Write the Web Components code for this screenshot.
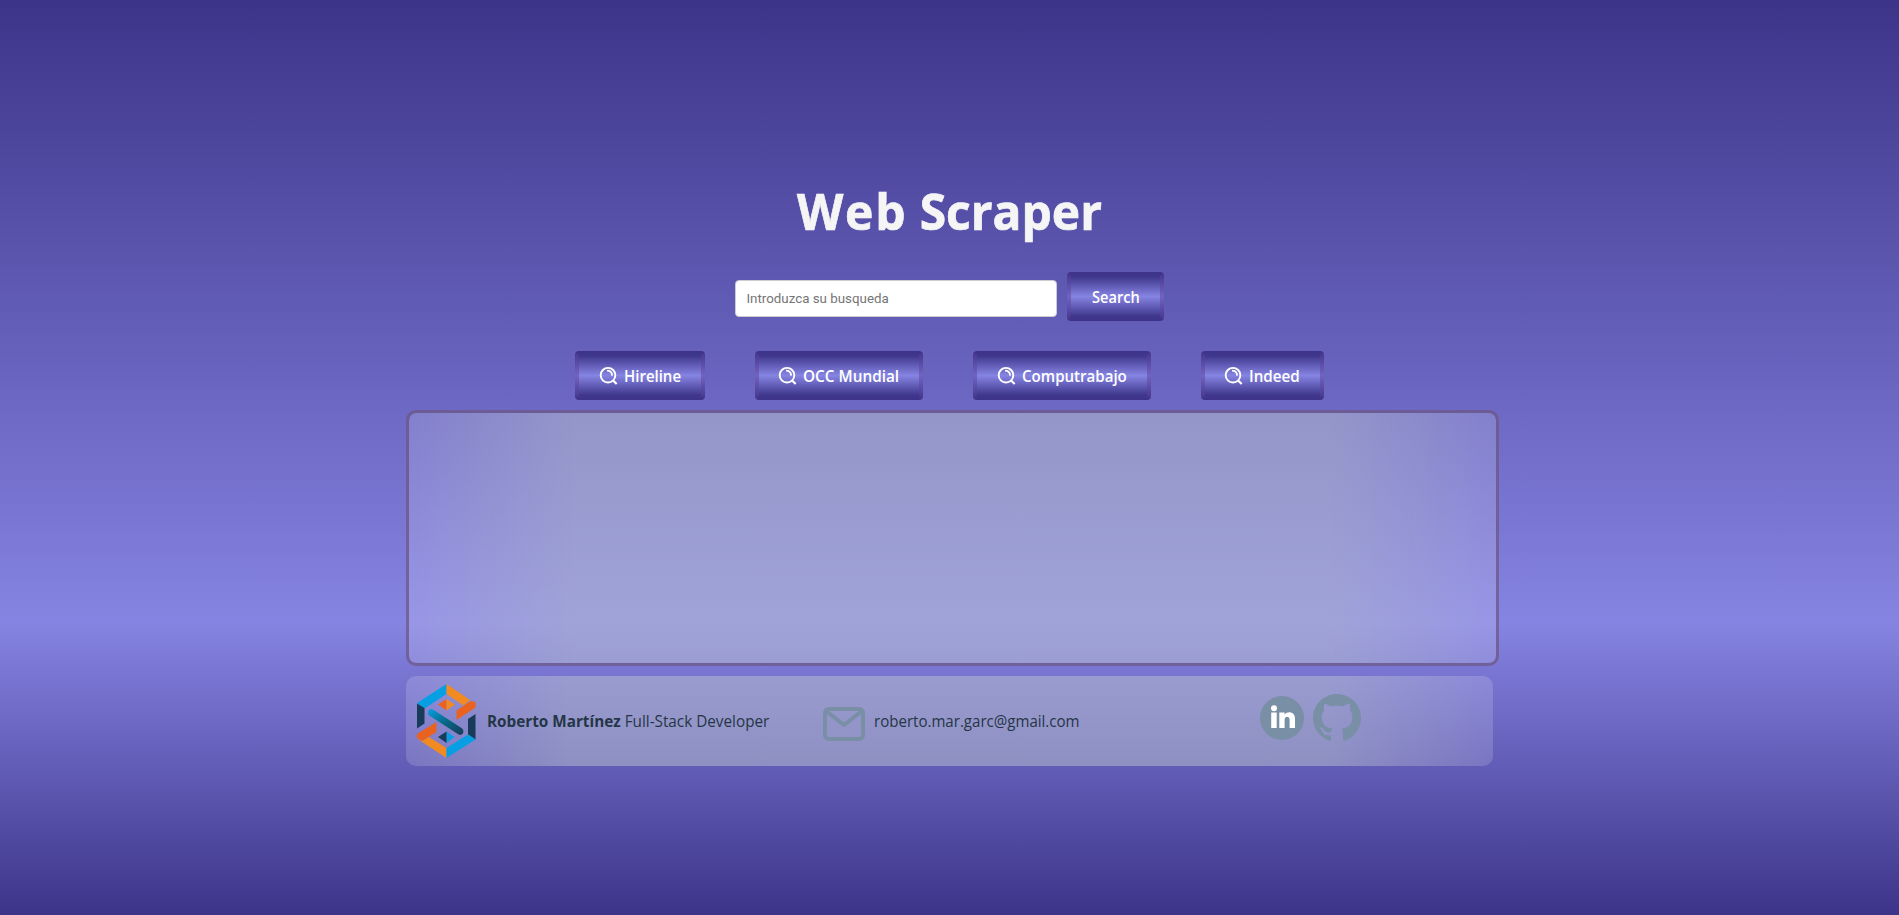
<!DOCTYPE html>
<html lang="es"><head><meta charset="utf-8"><title>Web Scraper</title>
<style>
html{height:100%}
body{margin:0;min-height:100%;background:linear-gradient(#3c3489 0%,#8684e2 68%,#3c3489 100%);font-family:"Open Sans","Noto Sans",sans-serif;--glass:linear-gradient(90deg,rgba(255,255,255,.15) 0,rgba(186,194,206,.5) 15%,rgba(186,194,206,.5) 85%,rgba(255,255,255,.15) 100%)}
</style></head><body>
<scraper-app></scraper-app>
<script>
const define=(name,html)=>customElements.define(name,class extends HTMLElement{
  constructor(){super();this.attachShadow({mode:'open'}).innerHTML=html;}
});
/* One line of text set to a given measure */
customElements.define('text-line',class extends HTMLElement{
  constructor(){super();this.attachShadow({mode:'open'}).innerHTML=`<style>:host{display:inline-block;white-space:nowrap}span{display:inline-block;transform-origin:0 50%}</style><span><slot></slot></span>`;}
  connectedCallback(){requestAnimationFrame(()=>this.fit());this.fit();}
  fit(){const s=this.shadowRoot.querySelector('span');const w=parseFloat(this.getAttribute('width'));this.style.width=w+'px';const n=s.offsetWidth;if(n)s.style.transform=`scaleX(${w/n})`;}
});
define('site-button',`<style>
:host{display:block;box-sizing:border-box;height:49px;border:4px solid;border-color:rgba(62,52,137,.75) rgba(80,50,140,.4);border-radius:4px;background:linear-gradient(#3c3489,#8684e2,#3c3489) padding-box,linear-gradient(#3c3489,#8684e2,#3c3489) border-box;color:#fff;font-weight:650;font-size:15.5px}
div{height:41px;display:flex;align-items:center;justify-content:center;gap:6px;padding-top:1px;box-sizing:border-box}
</style><div><slot name="icon"></slot><slot></slot></div>`);
define('search-icon',`<style>:host{display:block;width:19px;height:19px;margin:-2px 0 0 -1px}svg{display:block}</style>
<svg width="19" height="19" viewBox="0 0 19 19" fill="none" stroke="#fff"><circle cx="9" cy="9.200" r="7.300" stroke-width="1.900"/><path d="M13.800 14.200l3.900 3.800" stroke-width="2.200"/><path d="M8 4.700c3.200 0 5 1.800 5.200 4.900" stroke-width="1.800"/></svg>`);
define('search-box',`<style>:host{display:block}input{display:block;box-sizing:border-box;width:322px;height:37px;border:1px solid #ccc;border-radius:4px;padding:1px 10.500px;margin:0;font:13.333px Roboto,sans-serif;background:#fff;outline:0}input::placeholder{color:#757575;opacity:1}</style><input placeholder="Introduzca su busqueda">`);
define('result-panel',`<style>:host{display:block;box-sizing:border-box;width:1093px;height:256px;border:3px solid rgba(108,86,128,.7);border-radius:10px;background:var(--glass) padding-box}</style>`);
define('brand-logo',`<style>:host{display:block;width:60px;height:76px}svg{display:block}</style>
<svg width="60" height="76" viewBox="0 0 60 76"><defs><linearGradient id="g" x1="0" y1="0" x2="1" y2="1"><stop stop-color="#079fe3"/><stop offset=".5" stop-color="#086787"/><stop offset="1" stop-color="#173b58"/></linearGradient></defs>
<path fill="#079fe3" d="M0 19 29.500 0v10L7.500 24.500z"/><path fill="#f18b21" d="M29.500 0 53 16l-6.500 5.500L29.500 10z"/><path fill="#e9621f" d="M58.500 18v5.500L39.500 36v-9.500L53.500 17zM21 20.500 29.500 15v11.500z"/><path fill="#f18b21" d="M29.500 15l8.500 5.500-8.500 6z"/>
<path fill="#173b58" d="M0 19.500 7.500 24v15.500L0 44.500zM58.500 30v25.500L51 50.500V35z"/><path fill="url(#g)" d="M11 28q1-4 5-2.500L44.500 44q2 1 2 4-1 4-5 2.500L13 32q-2-1-2-4z"/>
<path fill="#e9621f" d="M19.500 38v10L5 57l-5-3v-4z"/><path fill="#f18b21" d="M0 54.500 5 57l7-4 17.500 11v10z"/><path fill="#079fe3" d="M29.500 64 51 50.500l7.500 5L29.500 74zM29.500 47.500l8 5.500-8 6z"/><path fill="#173b58" d="M29.500 47.500v11.500L21 53z"/></svg>`);
define('mail-icon',`<style>:host{display:block}svg{display:block}</style><svg width="42" height="34" viewBox="0 0 42 34" fill="none" stroke="#788fa6" stroke-width="4"><rect x="2" y="2" width="38" height="30" rx="4"/><path d="M3 4l18 14L39 4" stroke-linejoin="round"/></svg>`);
define('linkedin-icon',`<style>:host{display:block}svg{display:block}</style><svg width="44" height="44" viewBox="0 0 44 44"><circle cx="22" cy="22" r="22" fill="#788fa6"/><g fill="#fff"><circle cx="14" cy="12.300" r="3"/><path d="M11.200 16.500h5.500V32h-5.500zM19.300 16.500h5.300v2.200c3-4 10.400-3 10.400 4V32h-5.400v-8.200c0-4.300-5-3.900-5 0V32h-5.300z"/></g></svg>`);
define('github-icon',`<style>:host{display:block}svg{display:block}</style><svg width="48" height="48" viewBox="0 0 16 16"><path fill="#788fa6" d="M8 0C3.580 0 0 3.580 0 8c0 3.540 2.290 6.530 5.470 7.590.4.070.55-.17.55-.38 0-.19-.01-.82-.01-1.490-2.010.37-2.530-.49-2.690-.94-.09-.23-.48-.94-.82-1.130-.28-.15-.68-.52-.01-.53.63-.01 1.080.58 1.230.82.72 1.210 1.870.87 2.330.66.07-.52.28-.87.51-1.070-1.780-.2-3.640-.89-3.640-3.950 0-.87.31-1.590.82-2.150-.08-.2-.36-1.020.08-2.120 0 0 .67-.21 2.200.82a7.600 7.600 0 0 1 4 0c1.530-1.040 2.200-.82 2.200-.82.44 1.100.16 1.920.08 2.120.51.56.82 1.270.82 2.150 0 3.070-1.870 3.750-3.650 3.950.29.25.54.73.54 1.480 0 1.070-.01 1.930-.01 2.200 0 .21.15.46.55.38A8.010 8.010 0 0 0 16 8c0-4.420-3.580-8-8-8z"/></svg>`);
define('site-footer',`<style>:host{display:flex;box-sizing:border-box;width:1087px;height:90px;border-radius:10px;padding-left:11.500px;color:#243646;font-size:15.500px;background:var(--glass)}
brand-logo{margin-top:7.500px}.n{margin:34px 0 0 9.500px}.m{margin:34px 0 0 9px}mail-icon{margin:31px 0 0 54px}linkedin-icon{margin:20px 0 0 180px}github-icon{margin:18px 0 0 9px}</style>
<brand-logo></brand-logo><text-line class="n" width="282"><b>Roberto Martínez</b> Full-Stack Developer</text-line><mail-icon></mail-icon><text-line class="m" width="206">roberto.mar.garc@gmail.com</text-line><linkedin-icon></linkedin-icon><github-icon></github-icon>`);
define('scraper-app',`<style>:host{display:flex;flex-direction:column;align-items:center;padding-top:175px}
h1{margin:0;height:72px;line-height:72px;font-size:50px;font-weight:700;color:#f5f5f5;-webkit-text-stroke:.7px #f5f5f5}h1 span{letter-spacing:1.800px}
.s{display:flex;align-items:center;gap:10px;margin-top:25px}.s search-box{margin-top:3px}
.b{display:flex;gap:50px;margin-top:30px}result-panel{margin:10px 0 0 5px}site-footer{margin:10px 0 0 -1px}</style>
<h1><text-line width="305"><span>Web</span> Scraper</text-line></h1>
<div class="s"><search-box></search-box><site-button style="width:97px"><text-line width="48">Search</text-line></site-button></div>
<div class="b">
<site-button style="width:130px"><search-icon slot="icon"></search-icon><text-line width="57">Hireline</text-line></site-button>
<site-button style="width:168px"><search-icon slot="icon"></search-icon><text-line width="96">OCC Mundial</text-line></site-button>
<site-button style="width:178px"><search-icon slot="icon"></search-icon><text-line width="105">Computrabajo</text-line></site-button>
<site-button style="width:123px"><search-icon slot="icon"></search-icon><text-line width="51">Indeed</text-line></site-button></div>
<result-panel></result-panel><site-footer></site-footer>`);
</script></body></html>
